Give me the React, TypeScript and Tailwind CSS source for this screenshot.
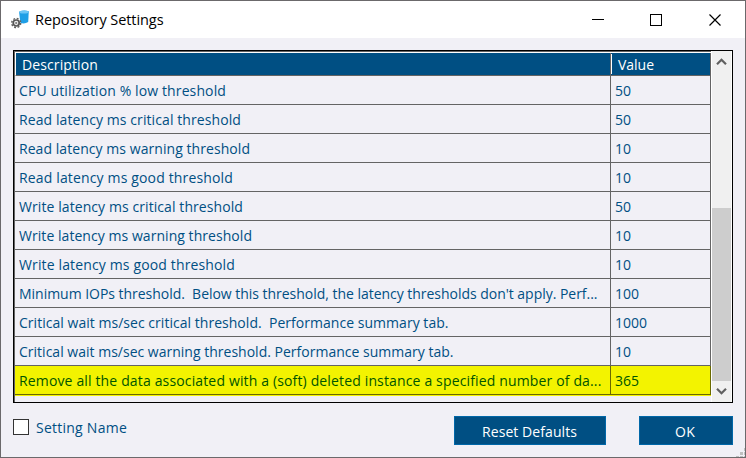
import React, { useLayoutEffect, useRef } from "react";

type FitProps = { text: string; width: number; className?: string };

/** One line of text, condensed or widened to an exact column width. */
function Fit({ text, width, className = "" }: FitProps) {
  const ref = useRef<HTMLSpanElement>(null);
  useLayoutEffect(() => {
    const el = ref.current;
    if (!el) return;
    el.style.letterSpacing = "0px";
    const natural = el.getBoundingClientRect().width;
    el.style.letterSpacing = `${(width - natural) / text.length}px`;
  }, [text, width]);
  return (
    <span ref={ref} className={`inline-block whitespace-pre ${className}`}>
      {text}
    </span>
  );
}

const rows: [string, number, string, number][] = [
  ["CPU utilization % low threshold", 207, "50", 16],
  ["Read latency ms critical threshold", 222, "50", 16],
  ["Read latency ms warning threshold", 231, "10", 16],
  ["Read latency ms good threshold", 214, "10", 16],
  ["Write latency ms critical threshold", 224, "50", 16],
  ["Write latency ms warning threshold", 233, "10", 16],
  ["Write latency ms good threshold", 216, "10", 16],
  ["Minimum IOPs threshold.  Below this threshold, the latency thresholds don't apply. Perf...", 578.5, "100", 24],
  ["Critical wait ms/sec critical threshold.  Performance summary tab.", 429.5, "1000", 32],
  ["Critical wait ms/sec warning threshold. Performance summary tab.", 434.5, "10", 16],
  ["Remove all the data associated with a (soft) deleted instance a specified number of da...", 582.5, "365", 24],
];

function AppIcon() {
  return (
    <svg width="20" height="20" viewBox="0 0 20 20" className="shrink-0">
      <path d="M8 1.8 Q13 -.6 17.8 1.3 L17.2 12 Q13.5 14.4 9.4 12.8 Z" fill="#1f9fe6" />
      <ellipse cx="12.9" cy="1.9" rx="4.6" ry="1.5" fill="#6cc5f5" />
      <circle cx="5.2" cy="13" r="4.5" fill="none" stroke="#606060" strokeWidth="1.5" strokeDasharray="1.9 1.634" />
      <circle cx="5.2" cy="13" r="3" fill="#eee" stroke="#565656" strokeWidth="1.7" />
      <circle cx="5.2" cy="13" r="1.1" fill="#777" />
    </svg>
  );
}

export default function App() {
  return (
    <div className="relative flex h-[458px] w-[746px] flex-col border border-[#6b696b] bg-[#f1f0f6] font-['Open_Sans','Noto_Sans',sans-serif] text-[14px] text-[#004f83]">
      <header className="flex h-[37px] shrink-0 items-center bg-white pl-[10px] text-black">
        <AppIcon />
        <Fit text="Repository Settings" width={128.5} className="ml-1 text-[14.5px] leading-[37px]" />
        <svg width="130" height="12" viewBox="0 0 130 12" className="ml-auto mr-[23px]" fill="none" stroke="#000" shapeRendering="crispEdges">
          <path d="M0 5.5H12M58.5 .5H69.5V11.5H58.5Z" />
          <path d="M117.5 .5L128.5 11.5M128.5 .5L117.5 11.5" shapeRendering="auto" strokeWidth="1.2" />
        </svg>
      </header>

      <main className="ml-3 mt-3 flex h-[353px] w-[720px] shrink-0 border border-black">
        <section className="w-[697px] border-l border-t border-[#646464]">
          <div className="flex h-6 border-b border-l border-t border-b-[#646464] border-l-white border-t-white bg-[#004f83] text-white">
            <div className="w-[594px] pl-[6px] leading-[23px]">
              <Fit text="Description" width={76} />
            </div>
            <div className="w-px bg-[#646464]" />
            <div className="mb-px mt-px w-[99px] border-l border-white pl-[6px] leading-[21px]">
              <Fit text="Value" width={36} />
            </div>
            <div className="w-px bg-[#646464]" />
          </div>
          {rows.map(([name, nameWidth, value, valueWidth], i) => {
            const selected = i === rows.length - 1;
            return (
              <div
                key={name}
                className={`flex h-[29px] border-b leading-[29px] ${selected ? "border-[#6a6a00] bg-[#f3f300] text-[#005500]" : "border-[#646464]"}`}
              >
                <div className={`w-[596px] overflow-hidden border-r pl-1 ${selected ? "border-[#6a6a00]" : "border-[#646464]"}`}>
                  <Fit text={name} width={nameWidth} />
                </div>
                <div className={`w-[100px] border-r pl-1 ${selected ? "border-[#6a6a00]" : "border-[#646464]"}`}>
                  <Fit text={value} width={valueWidth} />
                </div>
              </div>
            );
          })}
          <div className="h-px bg-[#f3f300]" />
        </section>
        <aside className="flex w-[21px] flex-col border-x border-white bg-[#f0f0f0]">
          <div className="flex h-[157px] justify-center pt-[7px]">
            <svg width="11" height="8" viewBox="0 0 11 8" fill="none" stroke="#606060" strokeWidth="2.2">
              <path d="M1 6.3L5.5 1.8L10 6.3" />
            </svg>
          </div>
          <div className="h-[173px] bg-[#cdcdcd]" />
          <div className="flex justify-center pt-[6px]">
            <svg width="11" height="8" viewBox="0 0 11 8" fill="none" stroke="#606060" strokeWidth="2.2">
              <path d="M1 1.7L5.5 6.2L10 1.7" />
            </svg>
          </div>
        </aside>
      </main>

      <footer className="flex items-start pl-3 pt-[13px]">
        <span className="mt-[3px] h-4 w-4 border border-[#333] bg-white" />
        <Fit text="Setting Name" width={91} className="ml-[7px] leading-[23px]" />
        <button className="ml-auto h-[29px] w-[152px] border border-[#0067a8] bg-[#004f83] pr-px leading-[29px] text-white">
          <Fit text="Reset Defaults" width={95} />
        </button>
        <button className="ml-[33px] mr-3 h-[29px] w-[94px] border border-[#0067a8] bg-[#004f83] pr-0.5 leading-[29px] text-white">
          <Fit text="OK" width={20} />
        </button>
      </footer>
      <svg width="9" height="9" viewBox="0 0 9 9" className="absolute bottom-0 right-0" fill="#bfbfbf" shapeRendering="crispEdges">
        <path d="M8 0h1v3h-1zM4 4h3v3h-3zM8 4h1v3h-1zM0 8h3v1h-3zM4 8h3v1h-3zM8 8h1v1h-1z" />
      </svg>
    </div>
  );
}
